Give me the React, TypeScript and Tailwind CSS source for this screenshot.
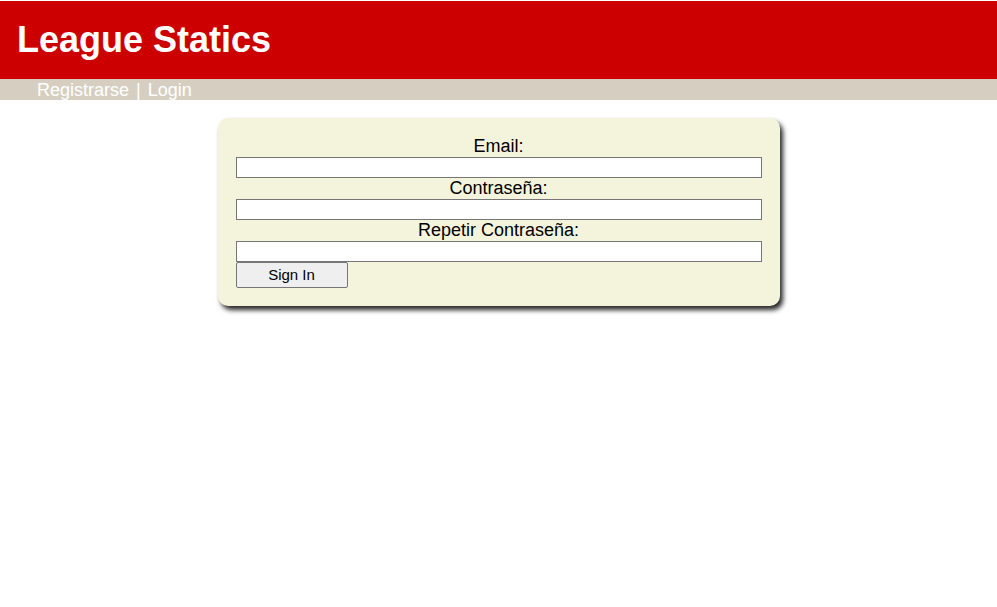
export default function App() {
  return (
    <div className="min-h-[607px] bg-white pt-px font-['Liberation_Sans',Arial,sans-serif]">
      <header className="flex h-[78px] items-center bg-[#cc0000] px-[17px]">
        <h1 className="text-[36px] font-bold leading-none text-white">League Statics</h1>
      </header>

      <nav className="flex h-[21px] items-center bg-[#d6cfc1] pl-[37px] text-[18px] leading-none text-white">
        <a className="cursor-pointer">Registrarse</a>
        <span className="px-[7px]">|</span>
        <a className="cursor-pointer">Login</a>
      </nav>

      <div className="flex justify-center pt-[18px]">
        <form
          onSubmit={(e) => e.preventDefault()}
          className="flex w-[562px] flex-col rounded-[10px] bg-[#f4f4dc] px-[18px] py-[18px] text-center text-[18px] leading-[21px] text-black shadow-[3px_4px_5px_rgba(0,0,0,0.85)]"
        >
          <label>Email:</label>
          <input type="email" className="h-[21px] border border-[#767676] bg-white px-[2px] text-[13px]" />

          <label>Contraseña:</label>
          <input type="password" className="h-[21px] border border-[#767676] bg-white px-[2px] text-[13px]" />

          <label>Repetir Contraseña:</label>
          <input type="password" className="h-[21px] border border-[#767676] bg-white px-[2px] text-[13px]" />

          <button
            type="submit"
            className="h-[26px] w-[112px] rounded-[2px] border border-[#767676] bg-[#efefef] pb-px text-[15px] leading-none text-black"
          >
            Sign In
          </button>
        </form>
      </div>
    </div>
  );
}
